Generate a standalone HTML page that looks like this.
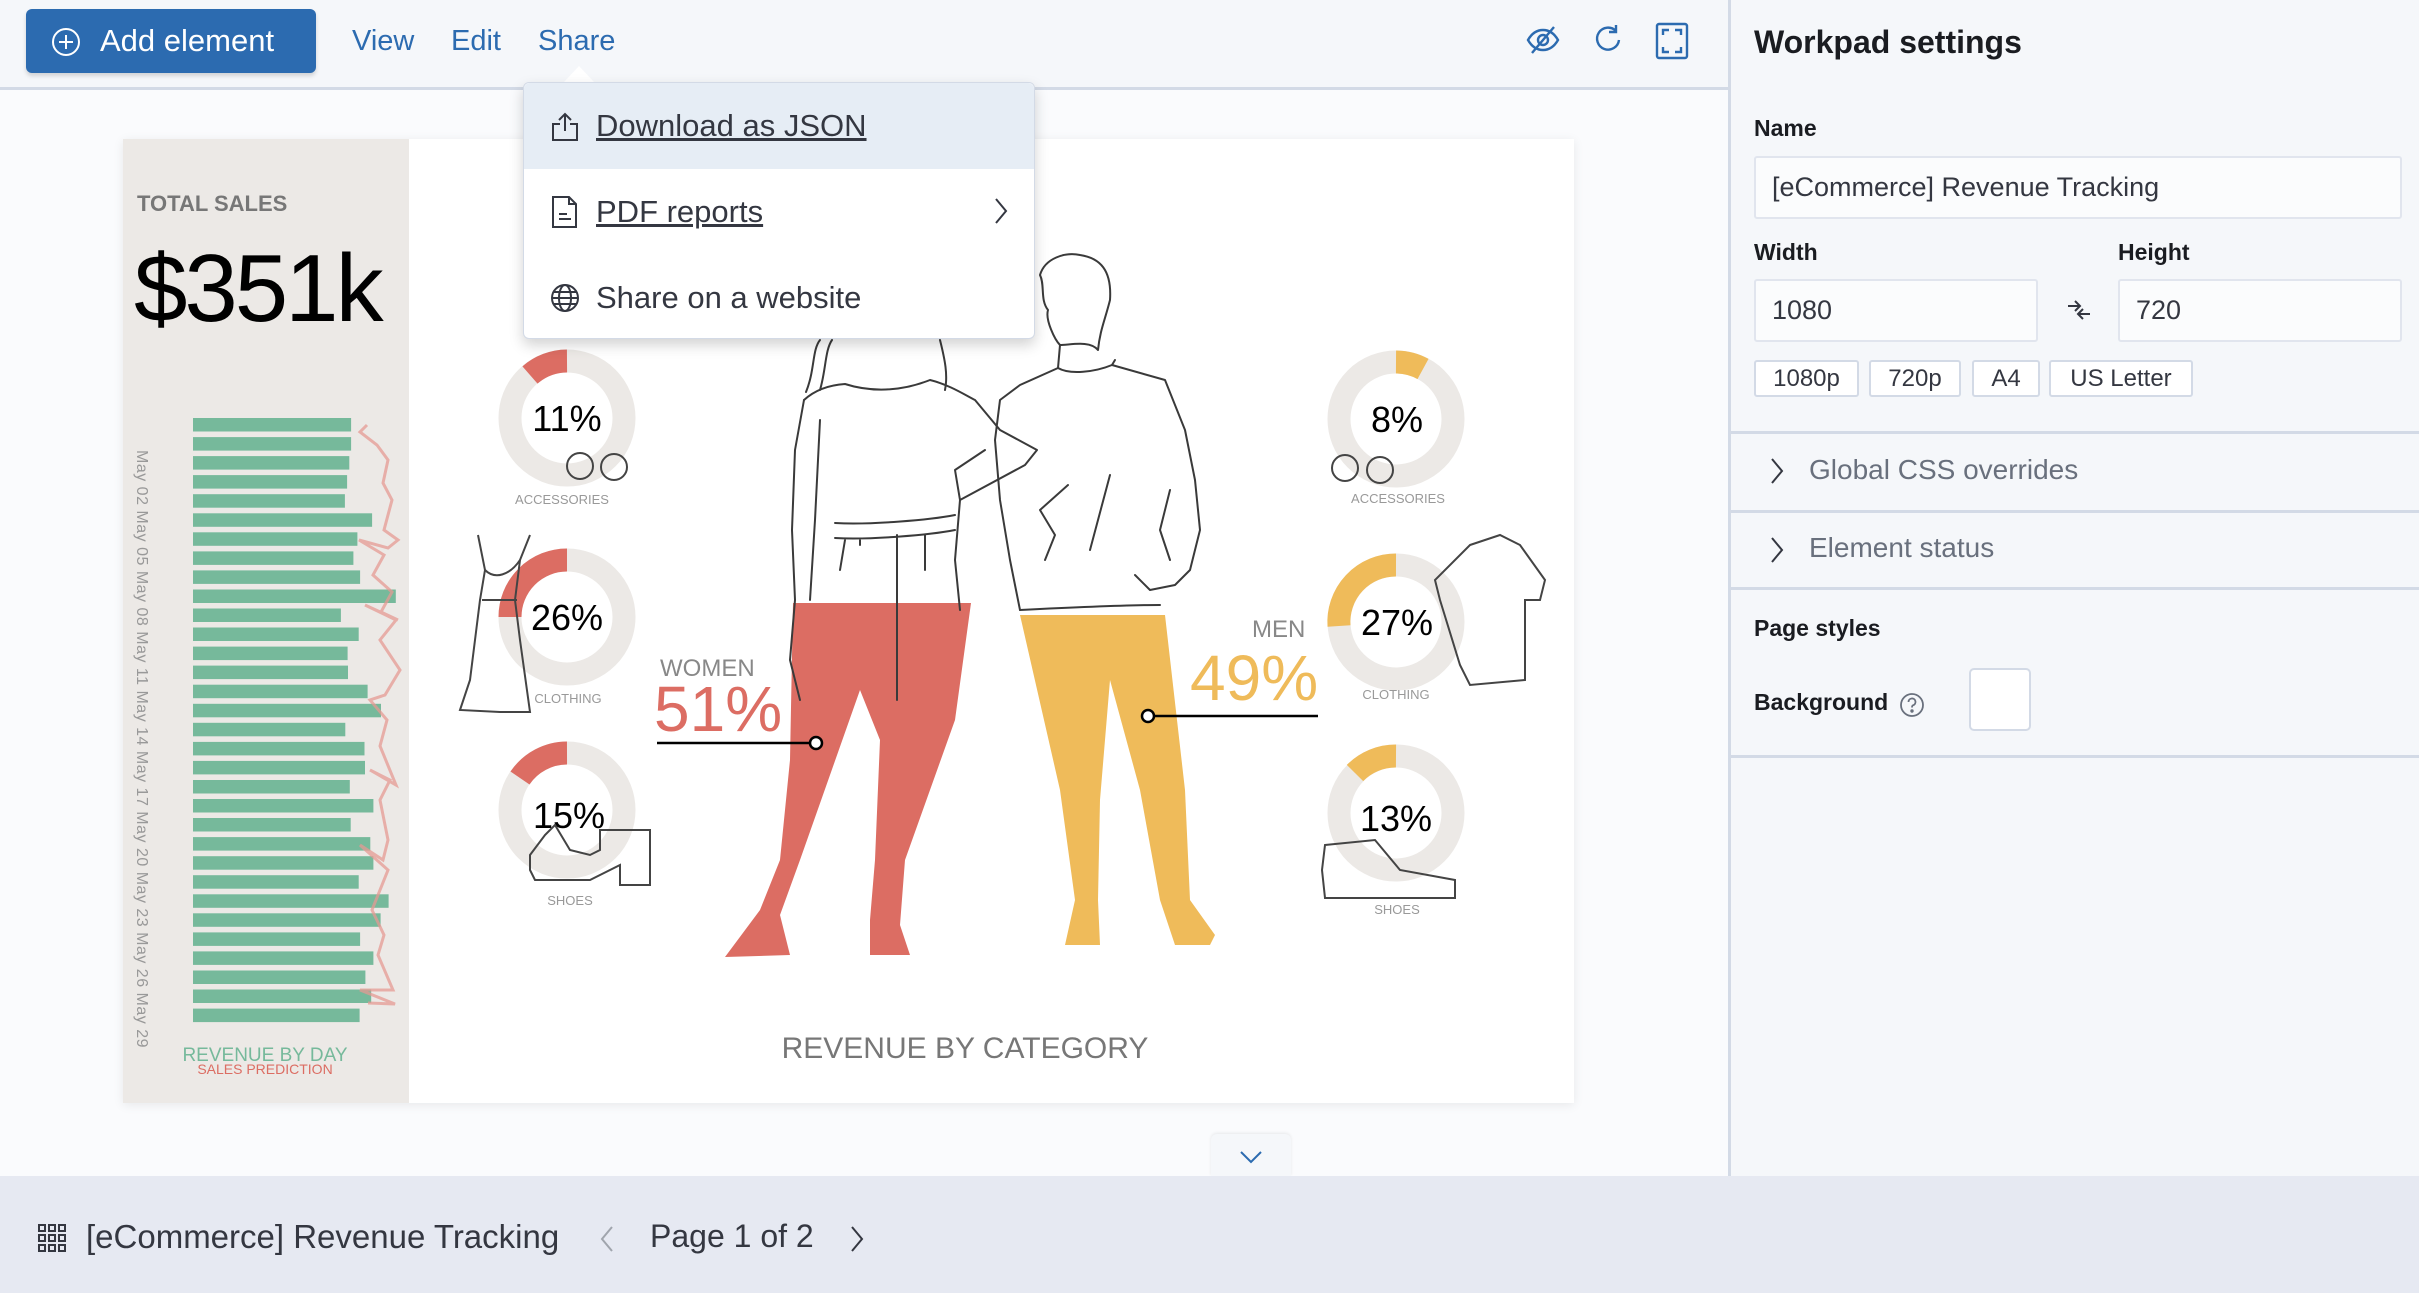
<!DOCTYPE html>
<html><head><meta charset="utf-8"><style>
*{box-sizing:border-box;margin:0;padding:0}
body{width:2419px;height:1293px;overflow:hidden;font-family:"Liberation Sans",Arial,sans-serif;background:#fafbfd;position:relative;color:#343741}
.abs{position:absolute}
#top{left:0;top:0;width:1728px;height:90px;background:#f5f7fa;border-bottom:3px solid #d3dae6}
#btn{left:26px;top:9px;width:290px;height:64px;background:#2c6bb0;border-radius:6px;color:#fff;font-size:31px;box-shadow:0 3px 4px rgba(0,0,0,.15)}
.nav{top:25px;font-size:29px;color:#2c6bb0}
#right{left:1728px;top:0;width:691px;height:1176px;background:#f5f7fa;border-left:3px solid #d3dae6}
.lbl{font-size:23px;font-weight:bold;color:#1a1c21}
.inp{background:#fbfcfd;border:2px solid #e1e5ee;font-size:27px;color:#343741;padding-left:16px;display:flex;align-items:center;border-radius:3px}
.pb{border:2px solid #d3dae6;background:#fff;font-size:24px;display:flex;align-items:center;justify-content:center;border-radius:3px}
.hr{left:1731px;width:688px;height:3px;background:#d3dae6}
.acc{font-size:28px;color:#69707d}
#foot{left:0;top:1176px;width:2419px;height:117px;background:#e6e9f2}
#dd{left:523px;top:82px;width:512px;height:257px;background:#fff;border-radius:6px;box-shadow:0 6px 14px rgba(0,0,0,.18);border:1px solid #d3dae6}
.it{position:absolute;left:0;width:100%;height:86px;font-size:31px;display:flex;align-items:center;padding-left:72px}
</style></head><body>
<div id="top" class="abs"></div>
<div id="btn" class="abs"><svg class="abs" style="left:25px;top:18px" width="30" height="30" viewBox="0 0 30 30"><circle cx="15" cy="15" r="13" fill="none" stroke="#fff" stroke-width="2"/><path d="M15 8v14M8 15h14" stroke="#fff" stroke-width="2"/></svg><span class="abs" style="left:74px;top:14px">Add element</span></div>
<div class="abs nav" style="left:352px">View</div>
<div class="abs nav" style="left:451px">Edit</div>
<div class="abs nav" style="left:538px">Share</div>
<svg class="abs" style="left:1525px;top:22px" width="36" height="36" viewBox="0 0 36 36" fill="none" stroke="#2c6bb0" stroke-width="2.4"><path d="M3 18c4-7 9-10 15-10s11 3 15 10c-4 7-9 10-15 10S7 25 3 18z"/><circle cx="18" cy="18" r="5"/><path d="M7 31L29 5"/></svg>
<svg class="abs" style="left:1592px;top:22px" width="32" height="36" viewBox="0 0 32 36" fill="none" stroke="#2c6bb0" stroke-width="2.4"><path d="M24 9a11 11 0 1 0 3 9"/><path d="M24 3v7h-7"/></svg>
<svg class="abs" style="left:1655px;top:22px" width="34" height="38" viewBox="0 0 34 38" fill="none" stroke="#2c6bb0" stroke-width="2.4"><rect x="2" y="2" width="30" height="34" rx="2"/><path d="M8 13V8h6M20 8h6v5M26 25v5h-6M14 30H8v-5"/></svg>

<div class="abs" style="left:123px;top:139px;width:1451px;height:964px;background:#fff;box-shadow:0 2px 10px rgba(0,0,0,.08)"></div>
<div class="abs" style="left:123px;top:139px;width:286px;height:964px;background:#ece9e6"></div>
<div class="abs" style="left:137px;top:191px;font-size:22px;color:#777;font-weight:bold">TOTAL SALES</div>
<div class="abs" style="left:134px;top:234px;font-size:96px;color:#000;letter-spacing:-3px">$351k</div>
<div class="abs" style="left:132px;top:450px;writing-mode:vertical-rl;font-size:16px;color:#999;letter-spacing:.5px">May 02 May 05 May 08 May 11 May 14 May 17 May 20 May 23 May 26 May 29</div>
<svg class="abs" style="left:0;top:0" width="1600" height="1110">
<g fill="#76b99b" id="bars"></g>
<polyline fill="none" stroke="#e59a93" stroke-opacity=".75" stroke-width="3" points="367,425 360,432 377,445 388,460 383,483 392,500 384,530 398,540 388,548 359,540 384,555 373,575 392,592 381,612 398,620 365,605 396,620 380,640 400,670 385,695 370,700 387,720 380,746 396,785 370,770 390,780 380,800 388,840 383,860 360,845 388,870 380,890 372,910 384,935 378,955 393,990 360,990 395,1004 368,1003"/>
<g fill="none" stroke="#ece9e6" stroke-width="23">
<circle cx="567" cy="418" r="57"/><circle cx="567" cy="617" r="57"/><circle cx="567" cy="810" r="57"/>
<circle cx="1396" cy="419" r="57"/><circle cx="1396" cy="622" r="57"/><circle cx="1396" cy="813" r="57"/>
</g>
<g fill="none" stroke-width="23">
<path d="M567 361A57 57 0 0 0 530 375" stroke="#dc6d63"/>
<path d="M567 560A57 57 0 0 0 510 617" stroke="#dc6d63"/>
<path d="M567 753A57 57 0 0 0 520 778" stroke="#dc6d63"/>
<path d="M1396 362A57 57 0 0 1 1423 369" stroke="#efbb5a"/>
<path d="M1396 565A57 57 0 0 0 1339 626" stroke="#efbb5a"/>
<path d="M1396 756A57 57 0 0 0 1355 773" stroke="#efbb5a"/>
</g>
<g font-size="36" fill="#000" text-anchor="middle" font-family="Liberation Sans">
<text x="567" y="431">11%</text><text x="567" y="630">26%</text><text x="569" y="828">15%</text>
<text x="1397" y="432">8%</text><text x="1397" y="635">27%</text><text x="1396" y="831">13%</text>
</g>
<g font-size="13" fill="#999" text-anchor="middle">
<text x="562" y="504">ACCESSORIES</text><text x="568" y="703">CLOTHING</text><text x="570" y="905">SHOES</text>
<text x="1398" y="503">ACCESSORIES</text><text x="1396" y="699">CLOTHING</text><text x="1397" y="914">SHOES</text>
</g>
<path d="M793 603H971L955 720 905 860 900 925 910 955 870 955 870 920 875 860 880 740 860 690 800 860 780 915 790 955 725 957 760 910 780 860 790 760Z" fill="#dc6d63"/>
<path d="M1020 615H1165L1185 790 1190 900 1215 935 1210 945 1175 945 1160 900 1140 790 1110 680 1100 800 1098 900 1100 945 1065 945 1075 900 1060 790Z" fill="#efbb5a"/>
<g fill="none" stroke="#3a3a3a" stroke-width="2" stroke-linejoin="round" stroke-linecap="round">
<!-- woman -->
<path d="M804 400C815 390 830 385 845 384C870 392 900 392 930 380C950 385 965 395 975 400L1000 430 1037 450 1025 465 960 500 955 470 985 450"/>
<path d="M804 400L795 450 792 530 795 600 790 660 800 700"/>
<path d="M820 420 815 520 810 600"/>
<path d="M835 523C870 525 930 520 955 515M835 538C870 540 930 535 955 530M897 535V700M860 540V545M925 535V570M845 540 840 570"/>
<path d="M806 392C815 370 812 350 820 340M820 390C826 370 825 350 832 340M940 340C945 360 948 375 945 390"/>
<path d="M960 500 955 560 960 610"/>
<!-- man -->
<path d="M1040 275C1045 258 1065 252 1080 255 1100 258 1112 270 1110 300 1105 320 1100 330 1098 350M1040 275C1045 285 1040 300 1048 310 1045 320 1055 340 1060 345 1070 345 1090 340 1098 350"/>
<path d="M1060 345 1058 368C1070 375 1095 372 1112 365L1115 360"/>
<path d="M1058 368 1020 385 1000 400 995 440 1000 500 1010 560 1020 610M1112 365 1165 380 1185 430 1195 480 1200 530 1190 570 1175 585 1150 590 1135 575"/>
<path d="M1020 610C1060 608 1120 605 1160 605"/>
<path d="M1068 485 1040 510 1055 535 1045 560M1110 475 1090 550"/>
<path d="M1170 490 1160 530 1170 560"/>
</g>
<g stroke="#000" stroke-width="2.5" fill="none"><path d="M657 743H810"/><circle cx="816" cy="743" r="6" fill="#fff"/><path d="M1155 716H1318"/><circle cx="1148" cy="716" r="6" fill="#fff"/></g>
<text x="660" y="676" font-size="24" fill="#888">WOMEN</text>
<text x="654" y="731" font-size="64" fill="#dc6d63">51%</text>
<text x="1252" y="637" font-size="24" fill="#888">MEN</text>
<text x="1190" y="700" font-size="64" fill="#efbb5a">49%</text>
<text x="965" y="1058" font-size="30" fill="#777" text-anchor="middle">REVENUE BY CATEGORY</text>
<text x="265" y="1061" font-size="19" fill="#76b99b" text-anchor="middle">REVENUE BY DAY</text>
<text x="265" y="1074" font-size="14" fill="#dc6d63" text-anchor="middle">SALES PREDICTION</text>
<g fill="none" stroke="#444" stroke-width="2">
<circle cx="580" cy="466" r="13"/><circle cx="614" cy="467" r="13"/>
<path d="M478 535 485 570 480 600 470 680 460 710 500 712 530 712 520 640 515 600 520 560 530 535"/>
<path d="M485 570C495 580 510 575 520 560M482 600H517"/>
<path d="M530 855 545 835 555 825 570 850 590 855 600 850 600 830 620 830 650 830 650 885 620 885 620 865 590 880 535 880 530 870Z"/>
<circle cx="1345" cy="468" r="13"/><circle cx="1380" cy="470" r="13"/>
<path d="M1470 545 1500 535 1520 545 1545 580 1540 600 1525 600 1525 680 1470 685 1460 665 1440 600 1435 580Z"/>
<path d="M1325 845 1375 840 1400 870 1455 880 1455 898 1325 898 1322 870Z"/>
</g>
</svg>
<div class="abs" style="left:1211px;top:1134px;width:80px;height:42px;background:#f5f7fa;border-radius:6px 6px 0 0;box-shadow:0 -1px 3px rgba(0,0,0,.08)"><svg class="abs" style="left:28px;top:16px" width="24" height="14" viewBox="0 0 24 14"><path d="M2 2l10 10L22 2" fill="none" stroke="#2c6bb0" stroke-width="2"/></svg></div>

<div class="abs" style="left:563px;top:66px;width:0;height:0;border-left:16px solid transparent;border-right:16px solid transparent;border-bottom:17px solid #fff"></div>
<div id="dd" class="abs">
<div class="it" style="top:0;background:#e6edf5;border-radius:6px 6px 0 0"><u>Download as JSON</u></div>
<div class="it" style="top:86px"><u>PDF reports</u></div>
<div class="it" style="top:172px">Share on a website</div>
<svg class="abs" style="left:26px;top:28px" width="30" height="32" viewBox="0 0 30 32" fill="none" stroke="#343741" stroke-width="2"><path d="M15 20V3M9 9l6-6 6 6M10 13H3v16h24V13h-7"/></svg>
<svg class="abs" style="left:26px;top:112px" width="30" height="34" viewBox="0 0 30 34" fill="none" stroke="#343741" stroke-width="2"><path d="M3 2h16l7 7v23H3zM19 2v7h7M9 19h8M9 24h12"/></svg>
<svg class="abs" style="left:470px;top:114px" width="14" height="28" viewBox="0 0 14 28"><path d="M2 2l10 12L2 26" fill="none" stroke="#343741" stroke-width="2"/></svg>
<svg class="abs" style="left:26px;top:200px" width="30" height="30" viewBox="0 0 30 30" fill="none" stroke="#343741" stroke-width="2"><circle cx="15" cy="15" r="13"/><ellipse cx="15" cy="15" rx="6" ry="13"/><path d="M2 15h26M4 9h22M4 21h22"/></svg>
</div>

<div id="right" class="abs"></div>
<div class="abs" style="left:1754px;top:24px;font-size:32px;font-weight:bold;color:#1a1c21">Workpad settings</div>
<div class="abs lbl" style="left:1754px;top:115px">Name</div>
<div class="abs inp" style="left:1754px;top:156px;width:648px;height:63px">[eCommerce] Revenue Tracking</div>
<div class="abs lbl" style="left:1754px;top:239px">Width</div>
<div class="abs lbl" style="left:2118px;top:239px">Height</div>
<div class="abs inp" style="left:1754px;top:279px;width:284px;height:63px">1080</div>
<div class="abs inp" style="left:2118px;top:279px;width:284px;height:63px">720</div>
<svg class="abs" style="left:2066px;top:298px" width="26" height="26" viewBox="0 0 26 26" fill="none" stroke="#343741" stroke-width="2"><path d="M2 8h12M9 3l5 5-5 5M24 16H12M17 11l-5 5 5 5"/></svg>
<div class="abs pb" style="left:1754px;top:360px;width:105px;height:37px">1080p</div>
<div class="abs pb" style="left:1869px;top:360px;width:92px;height:37px">720p</div>
<div class="abs pb" style="left:1972px;top:360px;width:68px;height:37px">A4</div>
<div class="abs pb" style="left:2049px;top:360px;width:144px;height:37px">US Letter</div>
<div class="abs hr" style="top:431px"></div>
<svg class="abs" style="left:1770px;top:457px" width="14" height="28" viewBox="0 0 14 28"><path d="M2 2l10 12L2 26" fill="none" stroke="#343741" stroke-width="2"/></svg>
<div class="abs acc" style="left:1809px;top:454px">Global CSS overrides</div>
<div class="abs hr" style="top:510px"></div>
<svg class="abs" style="left:1770px;top:536px" width="14" height="28" viewBox="0 0 14 28"><path d="M2 2l10 12L2 26" fill="none" stroke="#343741" stroke-width="2"/></svg>
<div class="abs acc" style="left:1809px;top:532px">Element status</div>
<div class="abs hr" style="top:587px"></div>
<div class="abs lbl" style="left:1754px;top:615px">Page styles</div>
<div class="abs lbl" style="left:1754px;top:689px">Background</div>
<svg class="abs" style="left:1899px;top:692px" width="26" height="26" viewBox="0 0 26 26" fill="none" stroke="#69707d" stroke-width="1.8"><circle cx="13" cy="13" r="11"/><path d="M9.5 10a3.5 3.5 0 1 1 4.5 3.3c-1 .4-1 1-1 2.2"/><circle cx="13" cy="19" r=".8" fill="#69707d"/></svg>
<div class="abs" style="left:1969px;top:668px;width:62px;height:63px;background:#fff;border:2px solid #d3dae6;border-radius:5px"></div>
<div class="abs hr" style="top:755px"></div>

<div id="foot" class="abs"></div>
<svg class="abs" style="left:38px;top:1224px" width="28" height="28" viewBox="0 0 28 28" fill="none" stroke="#343741" stroke-width="2"><rect x="1" y="1" width="6" height="6"/><rect x="11" y="1" width="6" height="6"/><rect x="21" y="1" width="6" height="6"/><rect x="1" y="11" width="6" height="6"/><rect x="11" y="11" width="6" height="6"/><rect x="21" y="11" width="6" height="6"/><rect x="1" y="21" width="6" height="6"/><rect x="11" y="21" width="6" height="6"/><rect x="21" y="21" width="6" height="6"/></svg>
<div class="abs" style="left:86px;top:1218px;font-size:33px;color:#343741">[eCommerce] Revenue Tracking</div>
<svg class="abs" style="left:600px;top:1225px" width="14" height="28" viewBox="0 0 14 28"><path d="M12 2L2 14l10 12" fill="none" stroke="#a0a5ad" stroke-width="2"/></svg>
<div class="abs" style="left:650px;top:1218px;font-size:32px;color:#343741">Page 1 of 2</div>
<svg class="abs" style="left:850px;top:1225px" width="14" height="28" viewBox="0 0 14 28"><path d="M2 2l10 12L2 26" fill="none" stroke="#343741" stroke-width="2"/></svg>
<script>
var ends=[511,511,507,502,497,558,525,516,531,611,488,528,503,504,548,578,498,541,542,508,561,510,554,561,528,595,577,531,561,543,556,530];
var g=document.getElementById('bars'),h='';
for(var i=0;i<ends.length;i++){var w=ends[i]/2.24+123-193;h+='<rect x="193" y="'+(418+i*19.05).toFixed(1)+'" width="'+w.toFixed(1)+'" height="13.5"/>';}
g.innerHTML=h;
</script>
</body></html>
